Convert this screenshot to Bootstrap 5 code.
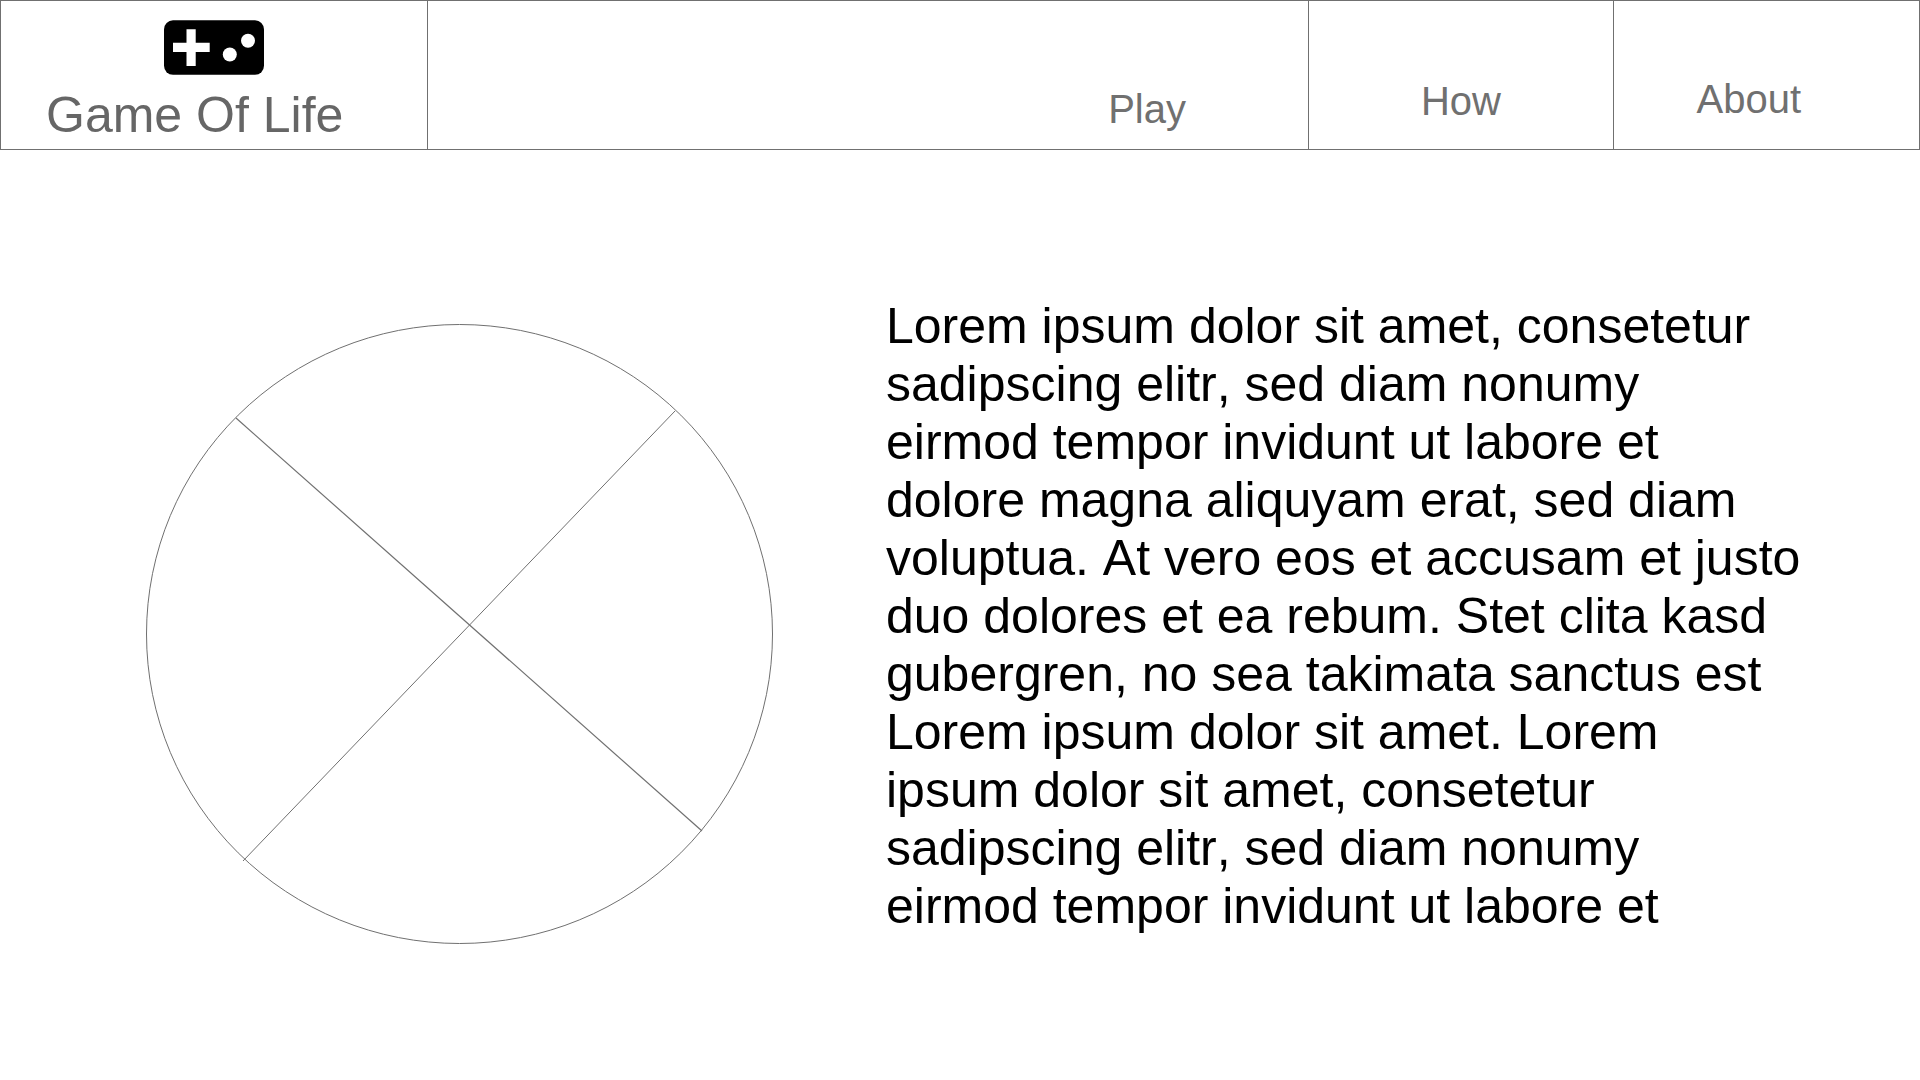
<!DOCTYPE html>
<html lang="en">
<head>
<meta charset="utf-8">
<meta name="viewport" content="width=device-width, initial-scale=1">
<title>Game Of Life</title>
<link href="https://cdn.jsdelivr.net/npm/bootstrap@5.3.0/dist/css/bootstrap.min.css" rel="stylesheet">
<style>
  body { font-family: "Liberation Sans", Arial, sans-serif; color: #000; background: #fff; }
  .site-bar { border: 1px solid #707070; min-height: 150px; grid-template-columns: 427fr 881fr 305fr 305fr; }
  .bar-cell { border-right: 1px solid #707070; min-width: 0; }
  .bar-cell:last-child { border-right: 0; }
  .cell-brand { padding: 19px 0 4px; }
  .cell-play { padding: 0 122px 16px 0; }
  .cell-how { padding-bottom: 24px; }
  .cell-about { padding: 0 118px 26px 0; }
  .brand-name { font-size: 50px; line-height: 58px; color: #666; padding-left: 45px; margin-top: 10px; }
  .bar-link { font-size: 40px; line-height: 48px; color: #707070; }
  .intro { padding: 147px 0 0 146px; gap: 113px; }
  .intro-figure { flex: 0 0 627px; margin-top: 27px; }
  .intro-text { font-size: 50px; line-height: 58px; font-kerning: none; }
</style>
<script src="https://cdn.jsdelivr.net/npm/bootstrap@5.3.0/dist/js/bootstrap.bundle.min.js"></script>
</head>
<body>
<header>
  <nav class="site-bar d-grid" aria-label="Main">
    <a class="bar-cell cell-brand d-flex flex-column text-decoration-none" href="#">
      <svg class="align-self-center" width="100" height="56" viewBox="0 0 100 56" aria-hidden="true">
        <rect y="0.3" width="100" height="54.5" rx="9"/>
        <path fill="#fff" d="M22.5 9.2h9.2v13.6h14V32h-14v13.9h-9.2V32H9v-9.2h13.500z"/>
        <circle cx="84" cy="20.8" r="7" fill="#fff"/>
        <circle cx="65.8" cy="34.5" r="7" fill="#fff"/>
      </svg>
      <span class="brand-name text-nowrap">Game Of Life</span>
    </a>
    <div class="bar-cell cell-play d-flex align-items-end justify-content-end">
      <a class="bar-link text-decoration-none" href="#play">Play</a>
    </div>
    <div class="bar-cell cell-how d-flex align-items-end justify-content-center">
      <a class="bar-link text-decoration-none" href="#how">How</a>
    </div>
    <div class="bar-cell cell-about d-flex align-items-end justify-content-end">
      <a class="bar-link text-decoration-none" href="#about">About</a>
    </div>
  </nav>
</header>
<main class="intro d-flex align-items-start">
  <figure class="intro-figure mb-0">
    <svg class="d-block w-100" viewBox="0 0 627 620" fill="none" stroke="#707070" role="img" aria-label="Image placeholder">
      <ellipse cx="313.5" cy="310" rx="313" ry="309.5"/>
      <path d="M90 94 556 507" stroke-width="1.2"/>
      <path d="M529 87 97 537"/>
    </svg>
  </figure>
  <p class="intro-text mb-0 text-nowrap">Lorem ipsum dolor sit amet, consetetur<br>
    sadipscing elitr, sed diam nonumy<br>
    eirmod tempor invidunt ut labore et<br>
    dolore magna aliquyam erat, sed diam<br>
    voluptua. At vero eos et accusam et justo<br>
    duo dolores et ea rebum. Stet clita kasd<br>
    gubergren, no sea takimata sanctus est<br>
    Lorem ipsum dolor sit amet. Lorem<br>
    ipsum dolor sit amet, consetetur<br>
    sadipscing elitr, sed diam nonumy<br>
    eirmod tempor invidunt ut labore et</p>
</main>
</body>
</html>
